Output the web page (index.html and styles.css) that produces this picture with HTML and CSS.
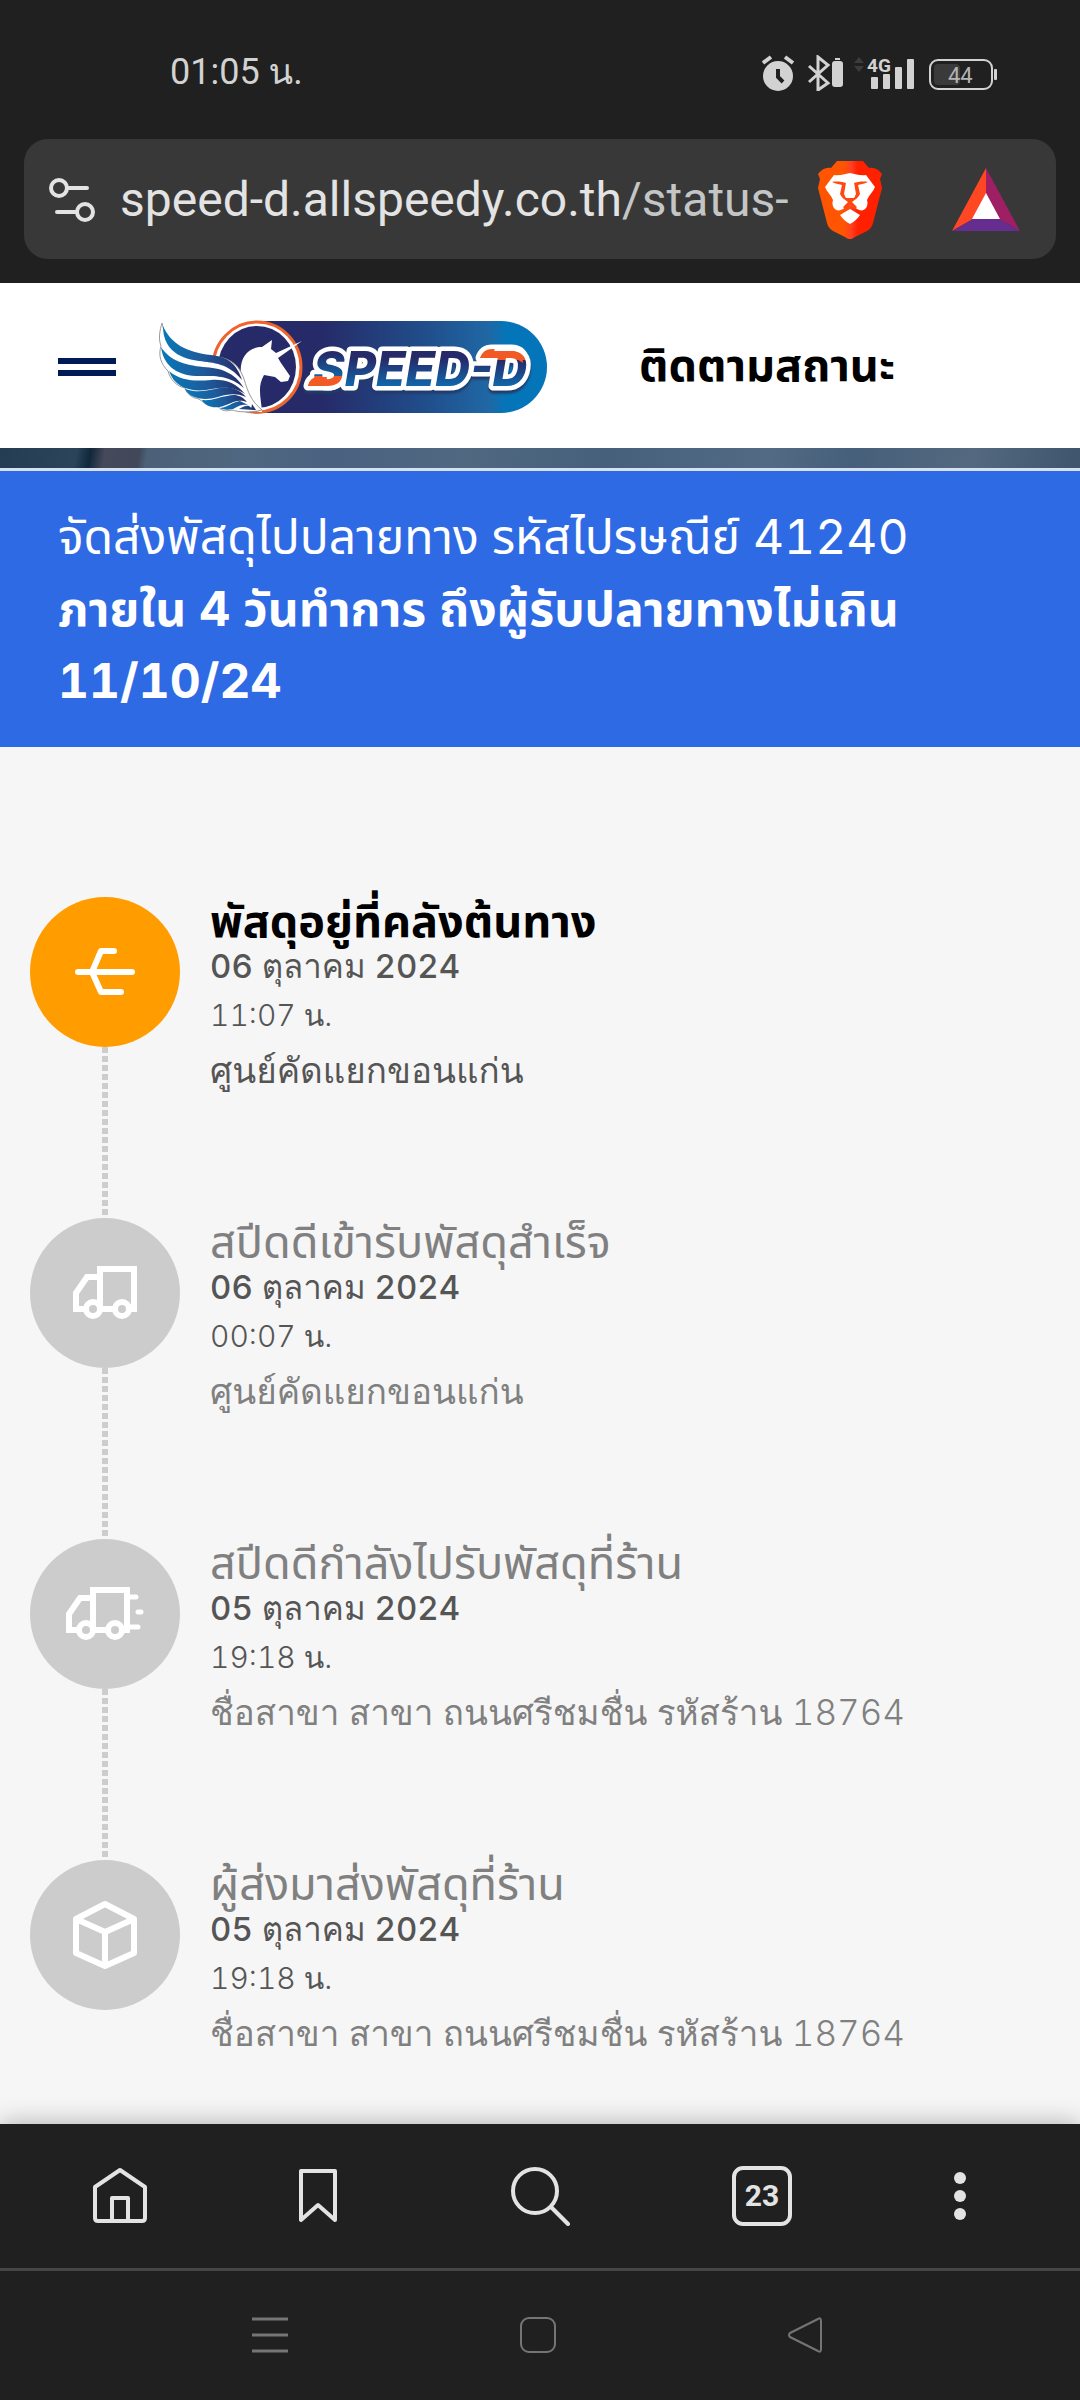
FILE: index.html
```html
<!DOCTYPE html>
<html lang="th">
<head>
<meta charset="utf-8">
<meta name="viewport" content="width=device-width, initial-scale=1">
<title>ติดตามสถานะ</title>
<link rel="stylesheet" href="styles.css">
</head>
<body>
<header class="browser">
  <div class="status">
    <time class="clock">01:05 น.</time>
    <svg class="status-icons" viewBox="0 0 236 36" aria-hidden="true">
      <g fill="#d2d2d2">
        <circle cx="16" cy="21" r="15"/>
        <path d="M1 8 9 2M23 2l8 6" stroke="#d2d2d2" stroke-width="4"/>
        <path d="M16 14v8l5 5" fill="none" stroke="#202020" stroke-width="4"/>
        <path d="M47 11 66 28 56 35V2l10 8L47 27" fill="none" stroke="#d2d2d2" stroke-width="3"/>
        <rect x="70" y="6" width="11" height="26" rx="3"/>
        <rect x="73" y="3" width="5" height="2"/>
        <path d="M92 8l5-6 5 6zM92 11l5 6 5-6z" fill="#3c3c3c"/>
        <rect x="109" y="22" width="7" height="12" rx="1"/>
        <rect x="121" y="19" width="7" height="15" rx="1"/>
        <rect x="133" y="12" width="7" height="22" rx="1"/>
        <rect x="145" y="4" width="7" height="30" rx="1"/>
        <rect x="168" y="5" width="62" height="29" rx="8" fill="none" stroke="#d2d2d2" stroke-width="2"/>
        <rect x="172" y="9" width="26" height="21" rx="4" fill="#3a3a3a"/>
        <rect x="232" y="14" width="3" height="11" rx="1"/>
        <text class="net" x="105" y="17">4G</text>
        <text class="charge" x="186" y="28">44</text>
      </g>
    </svg>
  </div>
  <div class="address">
    <button class="icon" aria-label="ข้อมูลเว็บไซต์">
      <svg width="46" height="44" viewBox="0 0 46 44" fill="none" stroke="#e3e3e3" stroke-width="4" stroke-linecap="round"><circle cx="10" cy="10" r="8"/><path d="M19 10h19M8 34h19"/><circle cx="36" cy="34" r="8"/></svg>
    </button>
    <button class="url">speed-d.allspeedy.co.th<span class="path">/status-</span></button>
    <button class="icon brave" aria-label="Brave Shields">
      <svg width="66" height="78" viewBox="0 0 66 78">
        <defs><linearGradient id="lion"><stop offset=".4" stop-color="#ff5500"/><stop offset=".52" stop-color="#ff4022"/><stop offset=".62" stop-color="#ff2000"/></linearGradient></defs>
        <path fill="url(#lion)" d="M20 0h26l6 7c5-1 9 1 13 6l-2 5 2 9-9 35c-1 4-3 6-6 8L38 76c-4 3-6 3-10 0L16 70c-3-2-5-4-6-8L1 27l2-9-2-5c4-5 8-7 13-6z"/>
        <path fill="#fff" d="M17 14c6 1 10-1 16-2 6 1 10 3 16 2l9 12c-2 5-6 8-8 13 2 6-2 12-8 10l-9-5-9 5c-6 2-10-4-8-10-2-5-6-8-8-13z"/>
        <path fill="#ff4810" d="M15 21c5-1 11 0 14 1l-2 11 2 4h8l2-4-2-11c3-1 9-2 14-1-4 2-8 2-10 3l2 9c-2 4-4 5-8 8l5 5-2 2-5-4-5 4-2-2 5-5c-4-3-6-4-8-8l2-9c-2-1-6-1-10-3z"/>
        <path fill="#fff" d="M29 22h8l1 14h-10zM23 54l10-6 10 6c-2 3-6 7-10 9-4-2-8-6-10-9z"/>
      </svg>
    </button>
    <button class="icon bat" aria-label="Brave Rewards">
      <svg width="70" height="64" viewBox="0 0 70 64"><path fill="#ff4724" d="M35 0v26L22 51 1 63z"/><path fill="#9e1f63" d="M35 0l34 63-21-12-13-25z"/><path fill="#662d91" d="M1 63l21-12h26l21 12z"/><path fill="#fff" d="M35 25l14 26H21z"/></svg>
    </button>
  </div>
</header>

<div class="site-head">
  <button class="menu" aria-label="เมนู"><span></span><span></span></button>
  <a class="logo" href="#" aria-label="SPEED-D">
    <svg width="390" height="96" viewBox="0 -2 390 96">
      <defs>
        <linearGradient id="pill"><stop offset=".22" stop-color="#262a68"/><stop offset=".6" stop-color="#20508d"/><stop offset=".8" stop-color="#1f68a5"/><stop offset=".86" stop-color="#0475b9"/></linearGradient>
        <linearGradient id="feather"><stop offset="0" stop-color="#0878b8"/><stop offset=".5" stop-color="#1d5b9b"/><stop offset="1" stop-color="#262a68"/></linearGradient>
        <linearGradient id="ink" gradientUnits="userSpaceOnUse" x1="0" y1="28" x2="0" y2="66"><stop offset=".25" stop-color="#262a68"/><stop offset="1" stop-color="#0f6aae"/></linearGradient>
        <linearGradient id="inkS" gradientUnits="userSpaceOnUse" x1="0" y1="28" x2="0" y2="66"><stop offset=".1" stop-color="#262a68"/><stop offset=".7" stop-color="#12629f"/><stop offset=".72" stop-color="#f15a24"/></linearGradient>
        <linearGradient id="inkD" gradientUnits="userSpaceOnUse" x1="0" y1="28" x2="0" y2="66"><stop offset=".28" stop-color="#f15a24"/><stop offset=".3" stop-color="#262a68"/><stop offset="1" stop-color="#0f6aae"/></linearGradient>
      </defs>
      <path d="M98 0h244a46 46 0 0 1 0 92H98z" fill="url(#pill)"/>
      <ellipse cx="98" cy="48" rx="45" ry="45" fill="#777" opacity=".7"/>
      <ellipse cx="98" cy="46" rx="44" ry="45" fill="#fff" stroke="#f0632c" stroke-width="3"/>
      <ellipse cx="98" cy="46" rx="39" ry="41" fill="#262a68"/>
      <path fill="#fff" d="M82 54C80 38 88 26 103 26l10-7-1 9 5 4 26-12-24 17 3 5 9 13-2 5-7 1-6-5-11-2c-7 12-3 22-2 37-12 0-24-14-21-37z"/>
      <path fill="#fff" stroke="#9a9a9a" stroke-width="1" d="M3 2C6 20 22 32 50 35c22 1 30 9 35 23 4 13 7 22 18 31-12 3-24 2-30 0-8 2-12 0-15-5-8 1-13-2-18-6-7-1-12-5-14-11-9-2-15-9-17-17C2 43-1 35 2 25-1 17 1 9 3 2z"/>
      <g fill="url(#feather)">
        <path d="M4 5c8 18 23 26 48 29 17 2 26 9 31 25-14-17-28-17-43-19C17 37 4 26 4 5z"/>
        <path d="M2 26c9 14 24 18 42 20 18 1 31 5 41 21-14-12-26-12-41-12C22 56 5 48 2 26z"/>
        <path d="M10 50c13 11 28 10 42 9 14-1 25 3 34 14-11-7-21-7-33-5-18 4-37 0-43-18z"/>
        <path d="M26 68c12 4 20 2 30 0 12-3 22-2 31 8-10-4-18-3-28 0-13 4-28 2-33-8z"/>
        <path d="M43 79c11 1 16-3 25-4 8-2 14-1 20 6-9-3-13 0-21 3-9 4-20 3-24-5z"/>
        <path d="M61 87c9-1 10-5 20-7l8 4c-8-1-10 2-15 4-5 1-10 1-13-1zM80 88c3-1 5-4 10-3l5 4zM92 89l1-6 4 6z"/>
      </g>
      <g class="wordmark">
        <path class="swash rim" d="M149 65q2-9 10-9h22q-2 9-12 9zM321 37q3-9 12-9h20q13 1 12 14l-8-5z"/>
        <text class="word rim" x="154" y="65"><tspan fill="url(#inkS)">S</tspan><tspan fill="url(#ink)">PEED-</tspan><tspan fill="url(#inkD)">D</tspan></text>
        <path class="swash" d="M149 65q2-9 10-9h9l-2 9zM321 37q3-7 12-7h20q11 1 11 12l-8-5z"/>
      </g>
    </svg>
  </a>
  <h1 class="page-title">ติดตามสถานะ</h1>
</div>

<main class="page">
  <div class="photo"></div>
  <section class="notice">
    <p>จัดส่งพัสดุไปปลายทาง รหัสไปรษณีย์ 41240</p>
    <p class="due">ภายใน 4 วันทำการ ถึงผู้รับปลายทางไม่เกิน 11/10/24</p>
  </section>
  <ol class="timeline">
    <li class="step current">
      <div class="rail"><span class="dot"><svg width="60" height="48" viewBox="0 0 60 48" fill="none" stroke="#fff" stroke-width="6" stroke-linecap="round" stroke-linejoin="round"><path d="M3 24h54M39 3H26L17 24l9 20h20"/></svg></span></div>
      <div class="info">
        <h2>พัสดุอยู่ที่คลังต้นทาง</h2>
        <p class="date">06 ตุลาคม 2024</p>
        <p class="time">11:07 น.</p>
        <p class="place">ศูนย์คัดแยกขอนแก่น</p>
      </div>
    </li>
    <li class="step">
      <div class="rail"><span class="dot"><svg width="64" height="54" viewBox="0 0 64 54" fill="none" stroke="#fff" stroke-width="6"><path d="M27 11H14L3 27v16h9M27 43V3h34v40h-5M28 43h14"/><circle cx="20" cy="43" r="7"/><circle cx="49" cy="43" r="7"/></svg></span></div>
      <div class="info">
        <h2>สปีดดีเข้ารับพัสดุสำเร็จ</h2>
        <p class="date">06 ตุลาคม 2024</p>
        <p class="time">00:07 น.</p>
        <p class="place">ศูนย์คัดแยกขอนแก่น</p>
      </div>
    </li>
    <li class="step">
      <div class="rail"><span class="dot"><svg width="78" height="54" viewBox="0 0 78 54" fill="none" stroke="#fff" stroke-width="6"><path d="M27 11H14L3 27v16h9M27 43V3h34v40h-5M28 43h14"/><path stroke-linecap="round" stroke-width="5" d="M61 10h9M72 25h3M61 40h11"/><circle cx="20" cy="43" r="7"/><circle cx="49" cy="43" r="7"/></svg></span></div>
      <div class="info">
        <h2>สปีดดีกำลังไปรับพัสดุที่ร้าน</h2>
        <p class="date">05 ตุลาคม 2024</p>
        <p class="time">19:18 น.</p>
        <p class="place">ชื่อสาขา สาขา ถนนศรีชมชื่น รหัสร้าน 18764</p>
      </div>
    </li>
    <li class="step">
      <div class="rail"><span class="dot"><svg width="66" height="70" viewBox="0 0 66 70" fill="none" stroke="#fff" stroke-width="6" stroke-linejoin="round"><path d="M33 4l29 15v34L33 66 4 53V19zM4 19l29 13 29-13M33 32v34"/></svg></span></div>
      <div class="info">
        <h2>ผู้ส่งมาส่งพัสดุที่ร้าน</h2>
        <p class="date">05 ตุลาคม 2024</p>
        <p class="time">19:18 น.</p>
        <p class="place">ชื่อสาขา สาขา ถนนศรีชมชื่น รหัสร้าน 18764</p>
      </div>
    </li>
  </ol>
</main>

<footer class="bottom">
  <nav class="toolbar">
    <button aria-label="หน้าแรก"><svg width="60" height="60" viewBox="0 0 60 60" fill="none" stroke="#e3e3e3" stroke-width="4" stroke-linejoin="round"><path d="M5 21 30 4l25 17v31q0 3-3 3H8q-3 0-3-3zM22 55V32h16v23"/></svg></button>
    <button aria-label="บุ๊กมาร์ก"><svg width="60" height="60" viewBox="0 0 60 60" fill="none" stroke="#e3e3e3" stroke-width="4" stroke-linejoin="round"><path d="M13 5h34v49L30 39 13 54z"/></svg></button>
    <button aria-label="ค้นหา"><svg width="60" height="60" viewBox="0 0 60 60" fill="none" stroke="#e3e3e3" stroke-width="4" stroke-linecap="round"><circle cx="25" cy="25" r="22"/><path d="m41 41 17 17"/></svg></button>
    <button class="tabs" aria-label="แท็บ"><span>23</span></button>
    <button aria-label="เพิ่มเติม"><svg width="60" height="60" viewBox="0 0 60 60" fill="#e3e3e3"><circle cx="30" cy="12" r="6"/><circle cx="30" cy="30" r="6"/><circle cx="30" cy="48" r="6"/></svg></button>
  </nav>
  <nav class="system">
    <button aria-label="ล่าสุด"><svg width="36" height="36" viewBox="0 0 36 36" stroke="#757575" stroke-width="3"><path d="M0 2h36M0 18h36M0 34h36"/></svg></button>
    <button aria-label="โฮม"><svg width="36" height="36" viewBox="0 0 36 36" fill="none" stroke="#757575" stroke-width="2"><rect x="1" y="1" width="34" height="34" rx="8"/></svg></button>
    <button aria-label="กลับ"><svg width="36" height="36" viewBox="0 0 36 36" fill="none" stroke="#757575" stroke-width="2" stroke-linejoin="round"><path d="M30 2q3-2 3 2v28q0 4-3 2L2 20q-2-2 0-4z"/></svg></button>
  </nav>
</footer>
</body>
</html>
```
FILE: styles.css
```css
* { box-sizing: border-box; }
body {
  margin: 0;
  min-height: 100vh;
  display: flex;
  flex-direction: column;
  background: #f6f6f6;
  font-family: Inter, Loma, sans-serif;
  font-variant-numeric: tabular-nums;
}
h1, h2, p, ol { margin: 0; padding: 0; }
button { border: 0; padding: 0; background: none; color: inherit; font: inherit; }
svg { display: block; }

.browser { background: #202020; padding: 0 24px 24px; font-family: Roboto, Loma, sans-serif; }
.status { display: flex; justify-content: space-between; align-items: center; padding: 51px 58px 45px 146px; }
.clock { font-size: 36px; line-height: 43px; color: #d2d2d2; }
.status-icons { width: 236px; height: 36px; }
.net { font: 700 19px Roboto, sans-serif; }
.charge { font: 400 22px Roboto, sans-serif; fill: #b4b4b4; }

.address { display: flex; align-items: center; height: 120px; padding: 2px 35px 0 25px; border-radius: 24px; background: #383838; }
.url { flex: 1; padding-left: 25px; text-align: left; white-space: nowrap; overflow: hidden; font-size: 48px; line-height: 60px; color: #e3e3e3; }
.path { color: #c4c6c6; }
.icon { flex: none; }
.bat { margin-left: 68px; }

.site-head { display: flex; align-items: center; height: 165px; padding: 2px 58px 0; background: #fff; }
.menu { display: grid; gap: 6px; width: 58px; }
.menu span { height: 6px; background: #001a57; }
.logo { margin-left: 43px; }
.wordmark { font: italic 800 48px Inter, sans-serif; filter: drop-shadow(0 3px 1px #223a6a); }
.rim { stroke: #fff; stroke-width: 9px; paint-order: stroke; stroke-linejoin: round; }
.swash { fill: #f15a24; }
.page-title { margin-left: 90px; font: 700 45px/60px "Noto Sans Thai", sans-serif; color: #000; }

.page { flex: 1; }
.photo {
  height: 23px;
  border-bottom: 3px solid #d6e0f0;
  background: linear-gradient(100deg, #243d52 0, #2c4459 76px, #10283c 90px, #46495a 104px, #41485a 138px, #4c6078 146px, #4f6780 240px, #4a6280 330px, #506880 460px, #46607c 600px, #526a84 760px, #465f7a 840px, #54697f 960px, #3f566e 1060px);
}
.notice { padding: 30px 58px; background: #2e6ae4; color: #fff; font-family: Inter, "Noto Sans Thai", sans-serif; font-size: 48px; line-height: 72px; }
.due { font-weight: 700; }

.timeline { list-style: none; padding: 150px 30px 0; }
.step { display: grid; grid-template-columns: 150px 1fr; column-gap: 30px; }
.step:not(:last-child) { min-height: 321px; }
.rail { display: flex; flex-direction: column; align-items: center; }
.dot { display: grid; place-items: center; width: 150px; height: 150px; border-radius: 50%; background: #ccc; }
.current .dot { background: #ff9c00; }
.step:not(:last-child) .rail::after {
  content: "";
  flex: 1;
  width: 6px;
  background: repeating-linear-gradient(#cdcdcd 0 6px, transparent 6px 9px);
}
.info h2 { font: 400 45px/52px "Noto Sans Thai", sans-serif; color: #808080; }
.current h2 { font-weight: 700; color: #000; }
.date { font-size: 33px; font-weight: 500; line-height: 34px; color: #555; }
.time { margin-top: 12px; font-size: 30px; font-weight: 300; line-height: 40px; color: #555; }
.place { margin-top: 14px; font-size: 35px; font-weight: 300; line-height: 42px; color: #808080; }
.info .date, .info .time { white-space: nowrap; }
.current h2 { color: #000; }
.current .place { color: #555; }

.bottom { background: #202020; color: #e3e3e3; box-shadow: 0 0 24px rgba(0, 0, 0, .3); }
.toolbar { display: grid; grid-template-columns: 192fr 204fr 240fr 204fr 192fr; height: 147px; padding: 0 24px; border-bottom: 3px solid #464646; }
.toolbar button, .system button { display: grid; place-items: center; }
.tabs span { display: grid; place-items: center; width: 60px; height: 60px; border: 4px solid #e3e3e3; border-radius: 11px; font: 700 30px/30px Roboto, sans-serif; }
.system { display: grid; grid-template-columns: repeat(3, 1fr); height: 129px; padding: 0 140px 2px 136px; }
```
